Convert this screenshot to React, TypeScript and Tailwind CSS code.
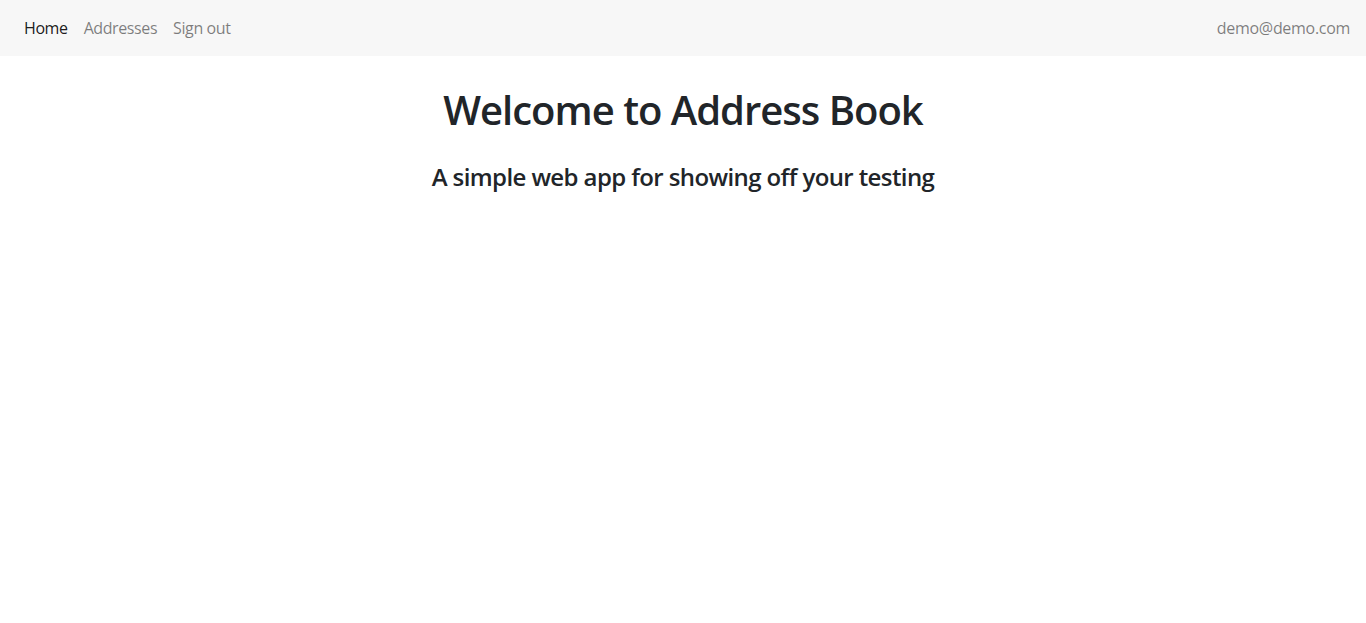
import React from "react";

export default function App() {
  const font = { fontFamily: '"Segoe UI", "Open Sans", "Liberation Sans", sans-serif' };
  return (
    <div className="min-h-[623px] bg-white" style={font}>
      <nav className="flex h-[56px] items-center justify-between bg-[#f7f7f7] px-4">
        <div className="flex items-center text-[16px] leading-[24px] tracking-[-0.4px]">
          <a className="px-2 py-2 text-[rgba(0,0,0,0.9)]">Home</a>
          <a className="px-2 py-2 text-[rgba(0,0,0,0.5)]">Addresses</a>
          <a className="px-2 py-2 text-[rgba(0,0,0,0.5)]">Sign out</a>
        </div>
        <span className="text-[16px] leading-[24px] tracking-[-0.3px] text-[rgba(0,0,0,0.5)]">demo@demo.com</span>
      </nav>
      <div className="flex flex-col items-center text-[#212529]">
        <h1 className="mt-[30px] text-[40px] font-semibold leading-[48px] tracking-[-1px]">Welcome to Address Book</h1>
        <h4 className="mt-[28px] text-[24px] font-semibold leading-[29px] tracking-[-0.6px]">A simple web app for showing off your testing</h4>
      </div>
    </div>
  );
}
